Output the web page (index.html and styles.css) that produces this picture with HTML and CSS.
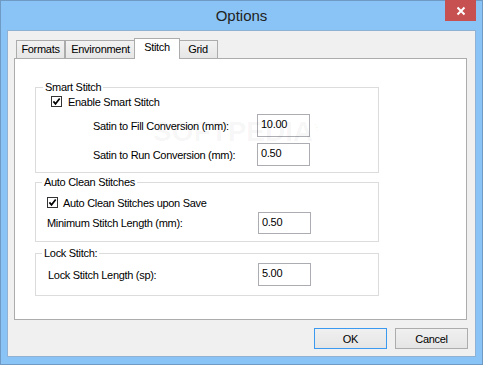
FILE: index.html
```html
<!DOCTYPE html>
<html lang="en">
<head>
  <meta charset="UTF-8" />
  <title>Options</title>
  <link rel="stylesheet" href="styles.css">
</head>
<body>

  <div class="window">
    <div class="titlebar">
      <span></span>
      <span class="title">Options</span>
      <button class="close">
        <svg width="10" height="10" viewBox="0 0 10 10"><path d="M1.5 1.5 L8.5 8.5 M8.5 1.5 L1.5 8.5" stroke="#fff" stroke-width="2" fill="none"/></svg>
      </button>
    </div>

    <div class="client">
      <!-- Tabs -->
      <div class="tabs">
        <span class="tab tab-formats">Formats</span>
        <span class="tab tab-env">Environment</span>
        <span class="tab tab-stitch active">Stitch</span>
        <span class="tab tab-grid">Grid</span>
      </div>

      <div class="panel">
        <fieldset class="group g1">
          <legend>Smart Stitch</legend>
          <div class="check">
            <span class="box"><svg width="9" height="9" viewBox="0 0 9 9"><path d="M1.4 4.4 L3.5 6.8 L7.7 1.5" stroke="#000" stroke-width="1.7" fill="none"/></svg></span>
            Enable Smart Stitch
          </div>
          <div class="field">
            <span class="label">Satin to Fill Conversion (mm):</span>
            <span class="input">10.00</span>
          </div>
          <div class="field">
            <span class="label">Satin to Run Conversion (mm):</span>
            <span class="input">0.50</span>
          </div>
        </fieldset>

        <fieldset class="group g2">
          <legend>Auto Clean Stitches</legend>
          <div class="check">
            <span class="box"><svg width="9" height="9" viewBox="0 0 9 9"><path d="M1.4 4.4 L3.5 6.8 L7.7 1.5" stroke="#000" stroke-width="1.7" fill="none"/></svg></span>
            Auto Clean Stitches upon Save
          </div>
          <div class="field">
            <span class="label">Minimum Stitch Length (mm):</span>
            <span class="input">0.50</span>
          </div>
        </fieldset>

        <fieldset class="group g3">
          <legend>Lock Stitch:</legend>
          <div class="field">
            <span class="label">Lock Stitch Length (sp):</span>
            <span class="input">5.00</span>
          </div>
        </fieldset>

        <div class="watermark">SOFTPEDIA<sup>®</sup></div>
      </div>

      <div class="footer">
        <button class="btn default">OK</button>
        <button class="btn">Cancel</button>
      </div>
    </div>
  </div>

</body>
</html>
```

FILE: styles.css
```css
body {
  margin: 0;
  font-family: "Liberation Sans", Arial, sans-serif;
  font-size: 11px;
  letter-spacing: -0.3px;
  color: #000;
}

.window {
  width: 483px;
  height: 365px;
  box-sizing: border-box;
  border: 1px solid #6f9ac4;
  background-color: #8ac3f5;
  padding: 0 6px 7px;
  display: flex;
  flex-direction: column;
}

.titlebar {
  height: 29px;
  display: grid;
  grid-template-columns: 1fr auto 1fr;
  align-items: center;
}

.title {
  font-size: 15px;
  letter-spacing: 0;
  color: #222;
}

.close {
  justify-self: end;
  align-self: start;
  margin-top: -1px;
  width: 31px;
  height: 21px;
  padding: 0;
  border: none;
  background-color: #c75050;
  display: flex;
  align-items: center;
  justify-content: center;
}

.client {
  height: 327px;
  box-sizing: border-box;
  border: 1px solid #8fb1d3;
  background-color: #f0f0f0;
  padding: 7px 8px 7px 6px;
  display: flex;
  flex-direction: column;
}

/* tabs */
.tabs {
  height: 20px;
  display: flex;
  align-items: flex-end;
  padding-left: 2px;
  position: relative;
  z-index: 1;
}

.tab {
  height: 18px;
  box-sizing: border-box;
  border: 1px solid #acacac;
  border-bottom: none;
  background: linear-gradient(#f2f2f2, #e6e6e6);
  display: flex;
  align-items: center;
  justify-content: center;
  padding-bottom: 1px;
}

.tab-formats { width: 49px; }
.tab-env { width: 71px; }
.tab-grid { width: 40px; }

.tab.active {
  width: 46px;
  height: 21px;
  margin: 0 -2px -1px;
  background: #fff;
  position: relative;
  z-index: 1;
  padding-bottom: 4px;
}

.panel {
  height: 262px;
  box-sizing: border-box;
  border: 1px solid #acacac;
  background-color: #fff;
  padding: 22px 0 0 20px;
  position: relative;
}

/* group boxes */
.group {
  width: 344px;
  box-sizing: border-box;
  min-width: 0;
  margin: 0;
  padding: 0;
  border: 1px solid #dcdcdc;
}

.group legend {
  margin-left: 6px;
  padding: 0 2px;
  line-height: 13px;
}

.g1 legend { margin-left: 7px; }

.g1 { padding-bottom: 6px; }
.g2 { margin-top: 3px; padding-bottom: 7px; }
.g3 { margin-top: 5px; padding-bottom: 9px; }

.check {
  height: 13px;
  display: flex;
  align-items: center;
}

.box {
  width: 11px;
  height: 11px;
  box-sizing: border-box;
  border: 1px solid #333;
  background-color: #fff;
  display: flex;
}

.g1 .check { margin-top: 1px; padding-left: 15px; }
.g1 .box { margin-right: 6px; }
.g2 .check { margin-top: 7px; padding-left: 11px; }
.g2 .box { margin-right: 5px; }

.field {
  display: flex;
  align-items: center;
}

.input {
  width: 53px;
  height: 23px;
  box-sizing: border-box;
  border: 1px solid #abadb3;
  background-color: #fff;
  padding: 3px 0 0 3px;
  line-height: 13px;
}

.g1 .field { margin-top: 6px; padding-left: 57px; }
.g1 .label { width: 164px; }
.g2 .field { margin-top: 3px; padding-left: 11px; }
.g2 .label { width: 211px; }
.g2 .input { height: 22px; }
.g3 .field { margin-top: 3px; padding-left: 12px; }
.g3 .label { width: 210px; }

.watermark {
  position: absolute;
  left: 138px;
  top: 55px;
  font-size: 28px;
  font-weight: bold;
  letter-spacing: 0;
  line-height: 28px;
  color: rgba(0, 0, 0, 0.045);
  pointer-events: none;
}

.watermark sup {
  font-size: 10px;
}

/* buttons */
.footer {
  display: flex;
  justify-content: flex-end;
  gap: 8px;
  margin-top: 8px;
  margin-right: -1px;
}

.btn {
  width: 73px;
  height: 21px;
  box-sizing: border-box;
  padding: 0;
  border: 1px solid #acacac;
  background: linear-gradient(#f0f0f0, #e5e5e5);
  font: inherit;
  letter-spacing: inherit;
  color: #000;
}

.btn.default {
  border-color: #3c99f0;
}
```
